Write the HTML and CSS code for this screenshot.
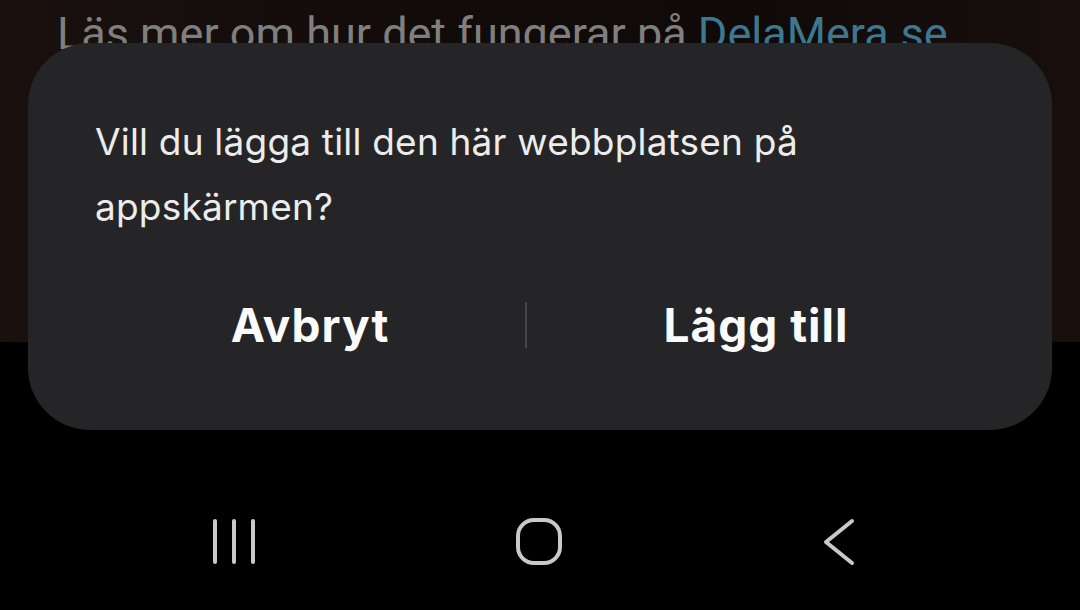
FILE: index.html
```html
<!DOCTYPE html>
<html lang="sv">
<head>
  <meta charset="UTF-8">
  <meta name="viewport" content="width=device-width, initial-scale=1.0">
  <title>Lägg till på appskärmen</title>
  <link rel="stylesheet" href="styles.css">
</head>
<body>
  <div class="screen">
    <div class="page">
      <p class="page-text">Läs mer om hur det fungerar på <span class="link">DelaMera.se</span></p>
    </div>

    <div class="navbar">
      <svg class="nav-icon" width="60" height="60" viewBox="0 0 60 60">
        <line x1="11" y1="9" x2="11" y2="50" />
        <line x1="30" y1="9" x2="30" y2="50" />
        <line x1="49" y1="9" x2="49" y2="50" />
      </svg>
      <svg class="nav-icon" width="60" height="60" viewBox="0 0 60 60">
        <rect x="9" y="8" width="42" height="43" rx="16" ry="16" />
      </svg>
      <svg class="nav-icon" width="60" height="60" viewBox="0 0 60 60">
        <polyline points="38,9 12,30 38,51" />
      </svg>
    </div>

    <div class="dialog">
      <p class="dialog-text">Vill du lägga till den här webbplatsen på appskärmen?</p>
      <div class="actions">
        <button class="action">Avbryt</button>
        <span class="divider"></span>
        <button class="action">Lägg till</button>
      </div>
    </div>
  </div>
</body>
</html>
```

FILE: styles.css
```css
body {
  margin: 0;
  background-color: #000;
  font-family: Inter, "Noto Sans", sans-serif;
}

.screen {
  position: relative;
  width: 1080px;
  height: 610px;
  overflow: hidden;
  display: flex;
  flex-direction: column;
}

.page {
  height: 342px;
  background: linear-gradient(90deg, #1a110f 0%, #110b09 40%, #0f0a08 70%, #180f0d 100%);
}

.page-text {
  margin: 0;
  padding: 8px 0 0 57px;
  font-family: Roboto, sans-serif;
  font-size: 45px;
  line-height: 52px;
  color: #7f7f7f;
  white-space: nowrap;
}

.link {
  color: #3d7890;
}

.navbar {
  flex: 1;
  background-color: #000;
  display: flex;
  align-items: center;
  justify-content: space-between;
  padding: 132px 206px 0 204px;
}

.nav-icon {
  fill: none;
  stroke: #c9c9c9;
  stroke-width: 4;
  stroke-linecap: round;
  stroke-linejoin: round;
}

.dialog {
  position: absolute;
  left: 28px;
  top: 43px;
  width: 1024px;
  height: 387px;
  box-sizing: border-box;
  background-color: #252527;
  border-radius: 62px;
  padding: 66px 67px 0 67px;
}

.dialog-text {
  margin: 0;
  font-size: 37px;
  letter-spacing: 0.2px;
  line-height: 65px;
  color: #ececec;
  max-width: 780px;
}

.actions {
  display: grid;
  grid-template-columns: 430px 2px 458px;
  align-items: center;
  margin-top: 56px;
}

.action {
  background: none;
  border: none;
  padding: 0;
  font-family: Inter, "Noto Sans", sans-serif;
  font-weight: bold;
  font-size: 46px;
  letter-spacing: 1px;
  line-height: 60px;
  color: #fafafa;
}

.divider {
  width: 2px;
  height: 46px;
  background-color: #474749;
}
```
